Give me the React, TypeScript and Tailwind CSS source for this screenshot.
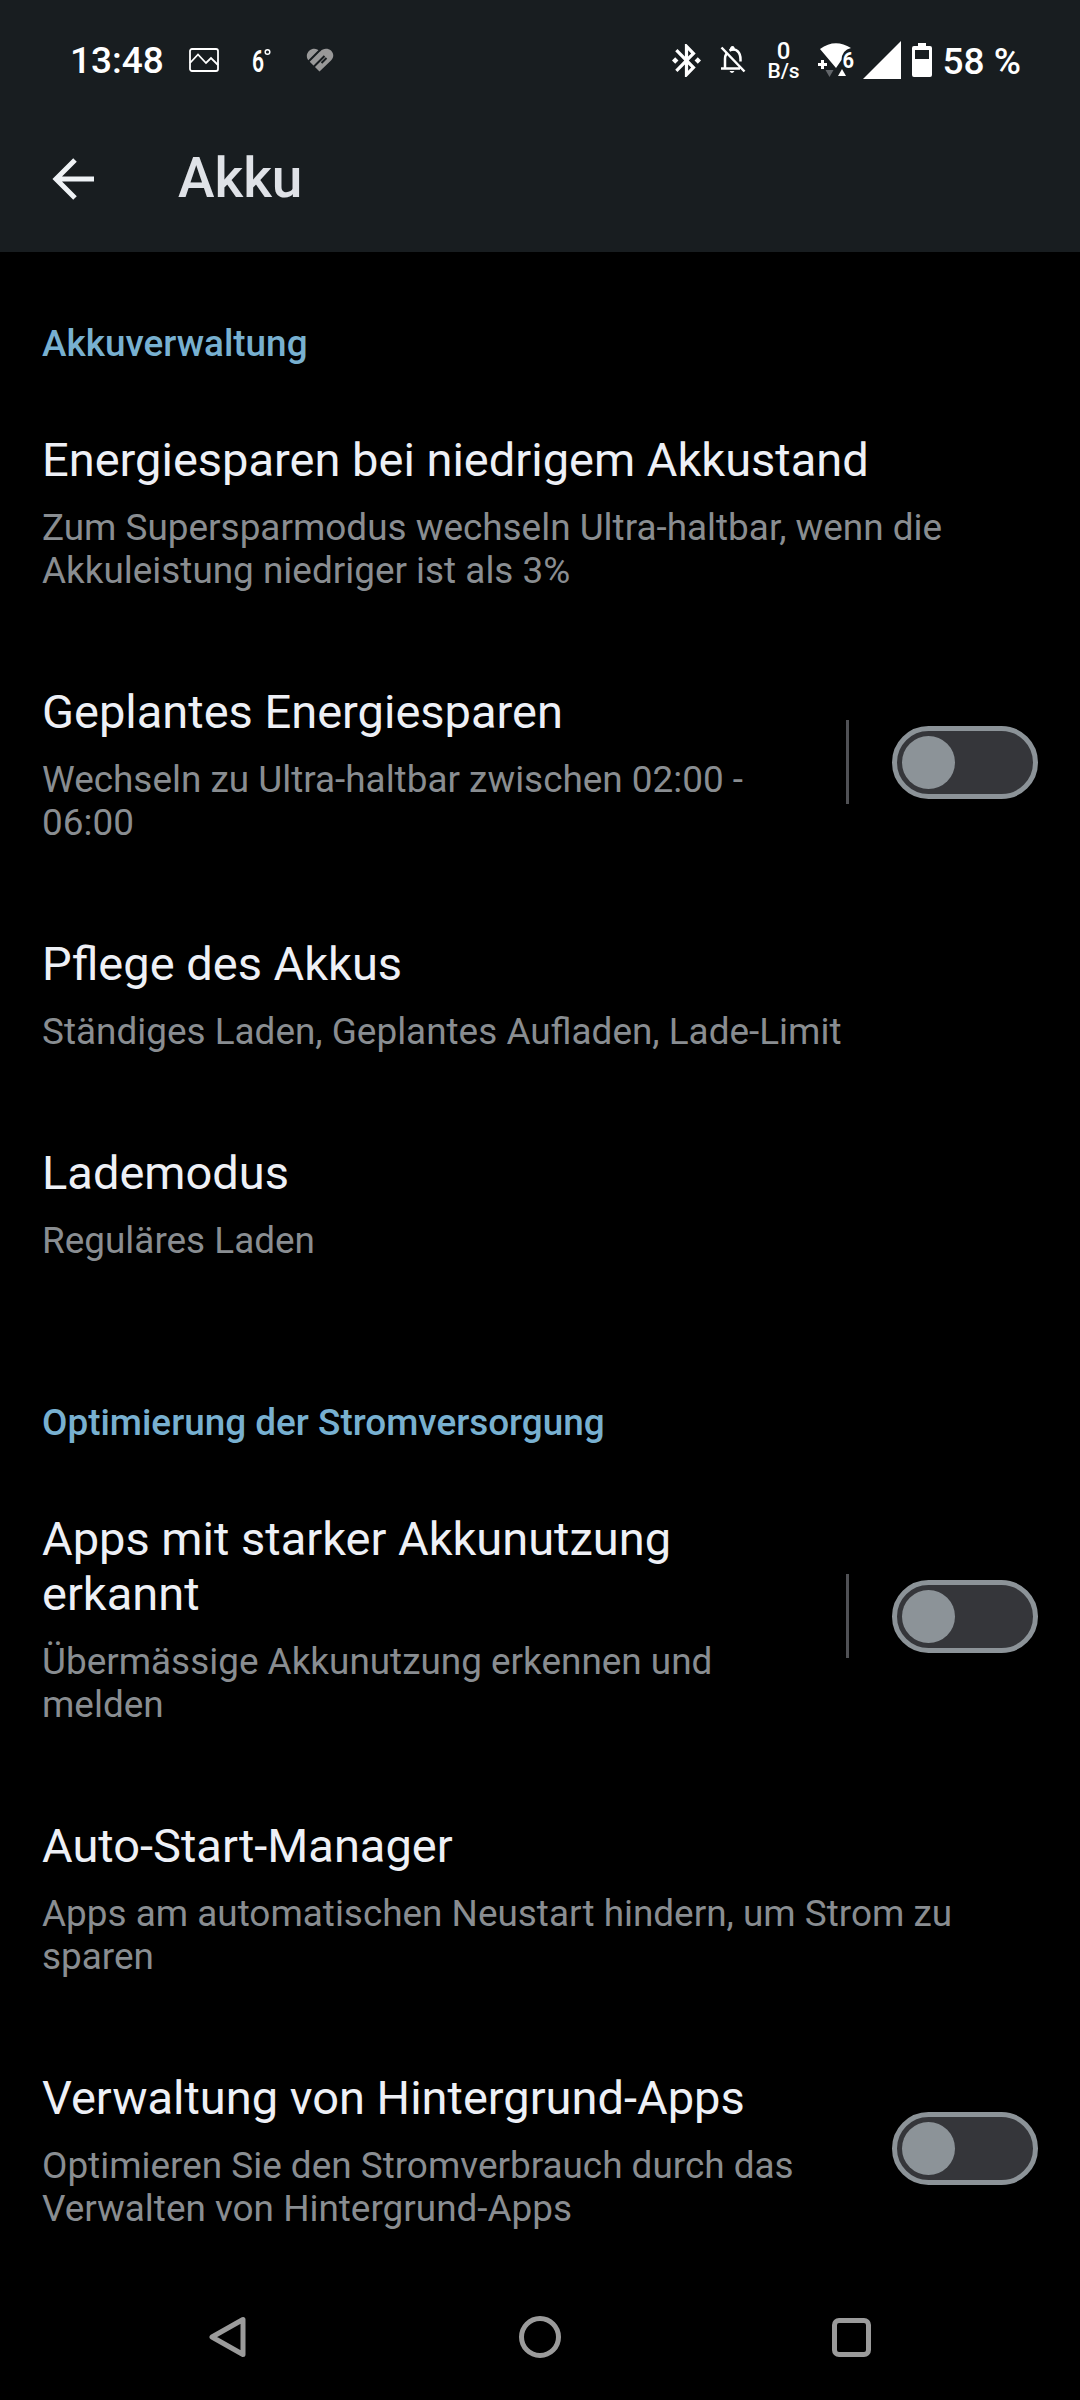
import type { ReactNode } from "react";

function Toggle() {
  return (
    <div className="-mt-[1.5px] h-[73px] w-[146px] shrink-0 rounded-full border-[5px] border-[#8c9398] bg-[#35363a] p-[5px]">
      <div className="size-[53px] rounded-full bg-[#8c9398]" />
    </div>
  );
}

function Section({ title, children }: { title: string; children: ReactNode }) {
  return (
    <section>
      <h2 className="mb-5 text-[36.9px] leading-[43px] font-medium text-[#78b0d0]">{title}</h2>
      {children}
    </section>
  );
}

type RowProps = {
  title: string;
  summary: string;
  toggle?: boolean;
  divider?: boolean;
};

function Row({ title, summary, toggle, divider }: RowProps) {
  return (
    <div className="flex items-center">
      <div className="min-w-0 flex-1 pt-[47px] pb-[45px]">
        <div className="text-[47px] leading-[55px] text-[#eef0f6]">{title}</div>
        <div className="mt-[19px] text-[36.9px] leading-[43px] text-[#898d91]">{summary}</div>
      </div>
      {divider && <div className="-mt-[2.5px] mr-[43px] ml-[42px] h-[84px] w-[3px] bg-[#505155]" />}
      {toggle && <Toggle />}
    </div>
  );
}

function StatusBar() {
  return (
    <div className="flex h-[120px] items-center pr-[59px] pl-[70px] text-white">
      <span className="w-[119px] text-[37px] leading-none font-medium">13:48</span>
      <svg className="h-[24px] w-[30px]" viewBox="0 0 30 24" fill="none" stroke="currentColor" strokeWidth="1.8">
        <rect x="1" y="1" width="28" height="22" rx="2" />
        <path d="M1 15 9 6.5l8 8.5 5-5 7 7" />
      </svg>
      <svg className="ml-[32px] h-[48px] w-[22px]" viewBox="-1 0 22 48" fill="currentColor">
        <text x="0" y="36" fontSize="32" fontWeight="600" transform="scale(.66 1)">6</text>
        <circle cx="15.5" cy="16" r="2.3" fill="none" stroke="currentColor" strokeWidth="1.5" />
      </svg>
      <svg className="ml-[33px] h-[24px] w-[28px]" viewBox="0 0 28 24">
        <path d="M14 3.5C11 0 6.5 0 3.500 2.500-.5 6 .5 10.500 3 13l10.500 10.500L25 12.500c3-3 3-7 0-10C22 0 17 0 14 3.500z" fill="#999" />
        <path d="M1.500 14.500 14.500 1.500M7 19.500 18.500 8M15.500 15l5-5" fill="none" stroke="#181d20" strokeWidth="2" />
      </svg>

      <div className="ml-auto flex items-center">
        <svg className="h-[33px] w-[29px]" viewBox="3 2 18 20" preserveAspectRatio="none" fill="currentColor">
          <path d="m7 12-2-2-2 2 2 2 2-2zm10.710-4.290L12 2h-1v7.590L6.410 5 5 6.410 10.590 12 5 17.590 6.410 19 11 14.410V22h1l5.710-5.710-4.300-4.290 4.300-4.290zM13 5.830l1.880 1.880L13 9.590V5.830zm1.880 10.460L13 18.170v-3.760l1.880 1.880zM19 10l-2 2 2 2 2-2-2-2z" />
        </svg>
        <svg className="ml-[19px] h-[30px] w-[26px]" viewBox="0 0 26 30" fill="none" stroke="currentColor" strokeWidth="2.5">
          <path d="m1.500 2.500 23 24M1 23.500h19M5 23V14q0-3 1.500-5.500M9.500 5.500c7-3 11 2 11 9v2" />
          <path d="M9.500 5.500Q10 1 12.500 1T15 5.500zM9.500 26h5q-2.500 4-5 0z" fill="currentColor" stroke="none" />
        </svg>
        <div className="mt-0.5 ml-[22px] flex w-[32px] flex-col items-center leading-none font-medium">
          <span className="text-[24px] leading-[20px]">0</span>
          <span className="text-[21px] leading-[20px]">B/s</span>
        </div>
        <svg className="ml-[18px] h-[34px] w-[37px]" viewBox="0 0 37 34" fill="currentColor">
          <path d="M2 6Q17-5 33 5q-9 2-9.500 12l-5.500 8z" />
          <path d="M0 20h9v3H0zM3 17h3v9H3z" />
          <text x="24.500" y="25" fontSize="22" fontWeight="700" textLength="11.500" lengthAdjust="spacingAndGlyphs">6</text>
          <path d="M7.500 27h8L11.500 34z" fill="#62666a" />
          <path d="m20 33 4-7 4 7z" />
        </svg>
        <svg className="ml-[8px] h-[38px] w-[38px]" viewBox="0 0 38 38" fill="currentColor">
          <path d="M38 0v38H0z" />
        </svg>
        <svg className="ml-[11px] h-[34px] w-[20px]" viewBox="0 0 20 34" fill="currentColor">
          <path fillRule="evenodd" d="M6 0h8v3h4q2 0 2 2v27q0 2-2 2H2q-2 0-2-2V5q0-2 2-2h4zM3 7v9h14V7z" />
        </svg>
        <span className="mt-0.5 ml-[11px] text-[37px] leading-none font-medium whitespace-nowrap">58 %</span>
      </div>
    </div>
  );
}

export default function App() {
  return (
    <div className="flex h-[2400px] w-[1080px] flex-col overflow-hidden bg-black font-['Roboto',sans-serif]">
      <header className="h-[252px] shrink-0 bg-[#181d20]">
        <StatusBar />
        <div className="flex h-[117px] items-center pl-[52px]">
          <svg className="h-[42px] w-[43px]" viewBox="0 0 43 42" fill="none" stroke="#eef2f5" strokeWidth="5">
            <path d="M42 21H4M23 2 4 21l19 19" />
          </svg>
          <h1 className="ml-[83px] text-[55px] leading-none font-medium text-[#dfe2e7]">Akku</h1>
        </div>
      </header>

      <main className="flex min-h-0 flex-1 flex-col gap-[94px] px-[42px] pt-[70px]">
        <Section title="Akkuverwaltung">
          <Row
            title="Energiesparen bei niedrigem Akkustand"
            summary="Zum Supersparmodus wechseln Ultra-haltbar, wenn die Akkuleistung niedriger ist als 3%"
          />
          <Row title="Geplantes Energiesparen" summary="Wechseln zu Ultra-haltbar zwischen 02:00 - 06:00" toggle divider />
          <Row title="Pflege des Akkus" summary="Ständiges Laden, Geplantes Aufladen, Lade-Limit" />
          <Row title="Lademodus" summary="Reguläres Laden" />
        </Section>
        <Section title="Optimierung der Stromversorgung">
          <Row title="Apps mit starker Akkunutzung erkannt" summary="Übermässige Akkunutzung erkennen und melden" toggle divider />
          <Row title="Auto-Start-Manager" summary="Apps am automatischen Neustart hindern, um Strom zu sparen" />
          <Row title="Verwaltung von Hintergrund-Apps" summary="Optimieren Sie den Stromverbrauch durch das Verwalten von Hintergrund-Apps" toggle />
        </Section>
      </main>

      {/* System navigation */}
      <nav className="flex h-[126px] shrink-0 items-center justify-between px-[209px]">
        <svg className="h-[42px] w-[38px]" viewBox="0 0 38 42" fill="none" stroke="#9b9b9b" strokeWidth="5" strokeLinejoin="round">
          <path d="M34 3.500v35L3 21z" />
        </svg>
        <div className="size-[42px] rounded-full border-[5px] border-[#9b9b9b]" />
        <div className="size-[39px] rounded-[7px] border-[5px] border-[#9b9b9b]" />
      </nav>
    </div>
  );
}
